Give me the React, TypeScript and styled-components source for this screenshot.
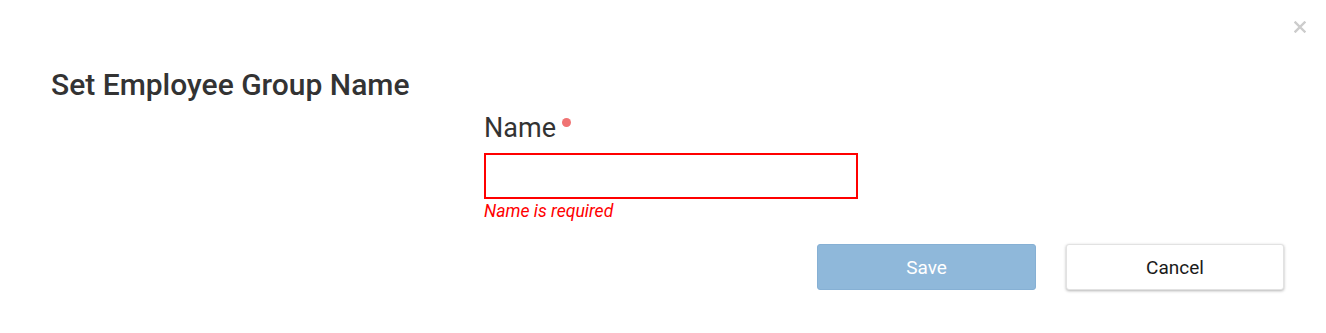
import React from 'react'
import styled, { createGlobalStyle } from 'styled-components'

const GlobalStyle = createGlobalStyle`
  html, body {
    margin: 0;
    padding: 0;
    background: #ffffff;
  }
  body {
    font-family: Roboto, "Noto Sans", Arial, sans-serif;
    color: #333333;
  }
`

const Modal = styled.div`
  position: relative;
  width: 1326px;
  height: 333px;
  box-sizing: border-box;
  padding: 67px 42px 0 51px;
  background: #ffffff;
`

const CloseButton = styled.button`
  position: absolute;
  top: 20px;
  right: 19px;
  width: 14px;
  height: 14px;
  padding: 0;
  border: none;
  background: transparent;
  cursor: pointer;
  display: flex;
  align-items: center;
  justify-content: center;

  svg {
    width: 12px;
    height: 12px;
    stroke: #cccccc;
  }
`

const Title = styled.h2`
  margin: 0;
  font-size: 30px;
  line-height: 35px;
  font-weight: 500;
  color: #333333;
`

const Form = styled.form`
  padding-left: 433px;
  margin-top: 10px;
`

const Field = styled.div`
  display: flex;
  flex-direction: column;
  width: 374px;
`

const Label = styled.label`
  display: flex;
  align-items: flex-start;
  gap: 6px;
  font-size: 27px;
  line-height: 32px;
  font-weight: 400;
  color: #333333;
`

const RequiredDot = styled.span`
  width: 9px;
  height: 9px;
  margin-top: 6px;
  border-radius: 50%;
  background: #f07373;
`

const TextInput = styled.input<{ $invalid?: boolean }>`
  margin-top: 9px;
  box-sizing: border-box;
  width: 100%;
  height: 46px;
  padding: 0 12px;
  border: 2px solid ${({ $invalid }) => ($invalid ? '#ff0000' : '#cccccc')};
  border-radius: 0;
  font-family: inherit;
  font-size: 18px;
  outline: none;
`

const ErrorText = styled.div`
  margin-top: 2px;
  font-size: 17.6px;
  line-height: 20px;
  font-style: italic;
  color: #ff0000;
`

const Actions = styled.div`
  display: flex;
  justify-content: flex-end;
  gap: 30px;
  margin-top: 23px;
`

const Button = styled.button<{ $primary?: boolean }>`
  box-sizing: border-box;
  width: ${({ $primary }) => ($primary ? '219px' : '218px')};
  height: 46px;
  border-radius: 3px;
  font-family: inherit;
  font-size: 19px;
  cursor: pointer;
  border: 1px solid ${({ $primary }) => ($primary ? '#86b0d4' : '#e2e2e2')};
  background: ${({ $primary }) => ($primary ? '#8fb8da' : '#ffffff')};
  color: ${({ $primary }) => ($primary ? '#ffffff' : '#1a1a1a')};
  box-shadow: ${({ $primary }) =>
    $primary ? 'none' : '0 1px 3px rgba(0, 0, 0, 0.3)'};
`

export default function App() {
  return (
    <>
      <GlobalStyle />
      <Modal>
        <CloseButton type="button" aria-label="Close">
          <svg viewBox="0 0 12 12" fill="none" strokeWidth="2.4" strokeLinecap="square">
            <path d="M1.5 1.5 L10.5 10.5 M10.5 1.5 L1.5 10.5" />
          </svg>
        </CloseButton>
        <Title>Set Employee Group Name</Title>
        <Form onSubmit={(e) => e.preventDefault()}>
          <Field>
            <Label htmlFor="group-name">
              Name
              <RequiredDot />
            </Label>
            <TextInput id="group-name" type="text" $invalid />
            <ErrorText>Name is required</ErrorText>
          </Field>
          <Actions>
            <Button type="submit" $primary disabled>
              Save
            </Button>
            <Button type="button">Cancel</Button>
          </Actions>
        </Form>
      </Modal>
    </>
  )
}
